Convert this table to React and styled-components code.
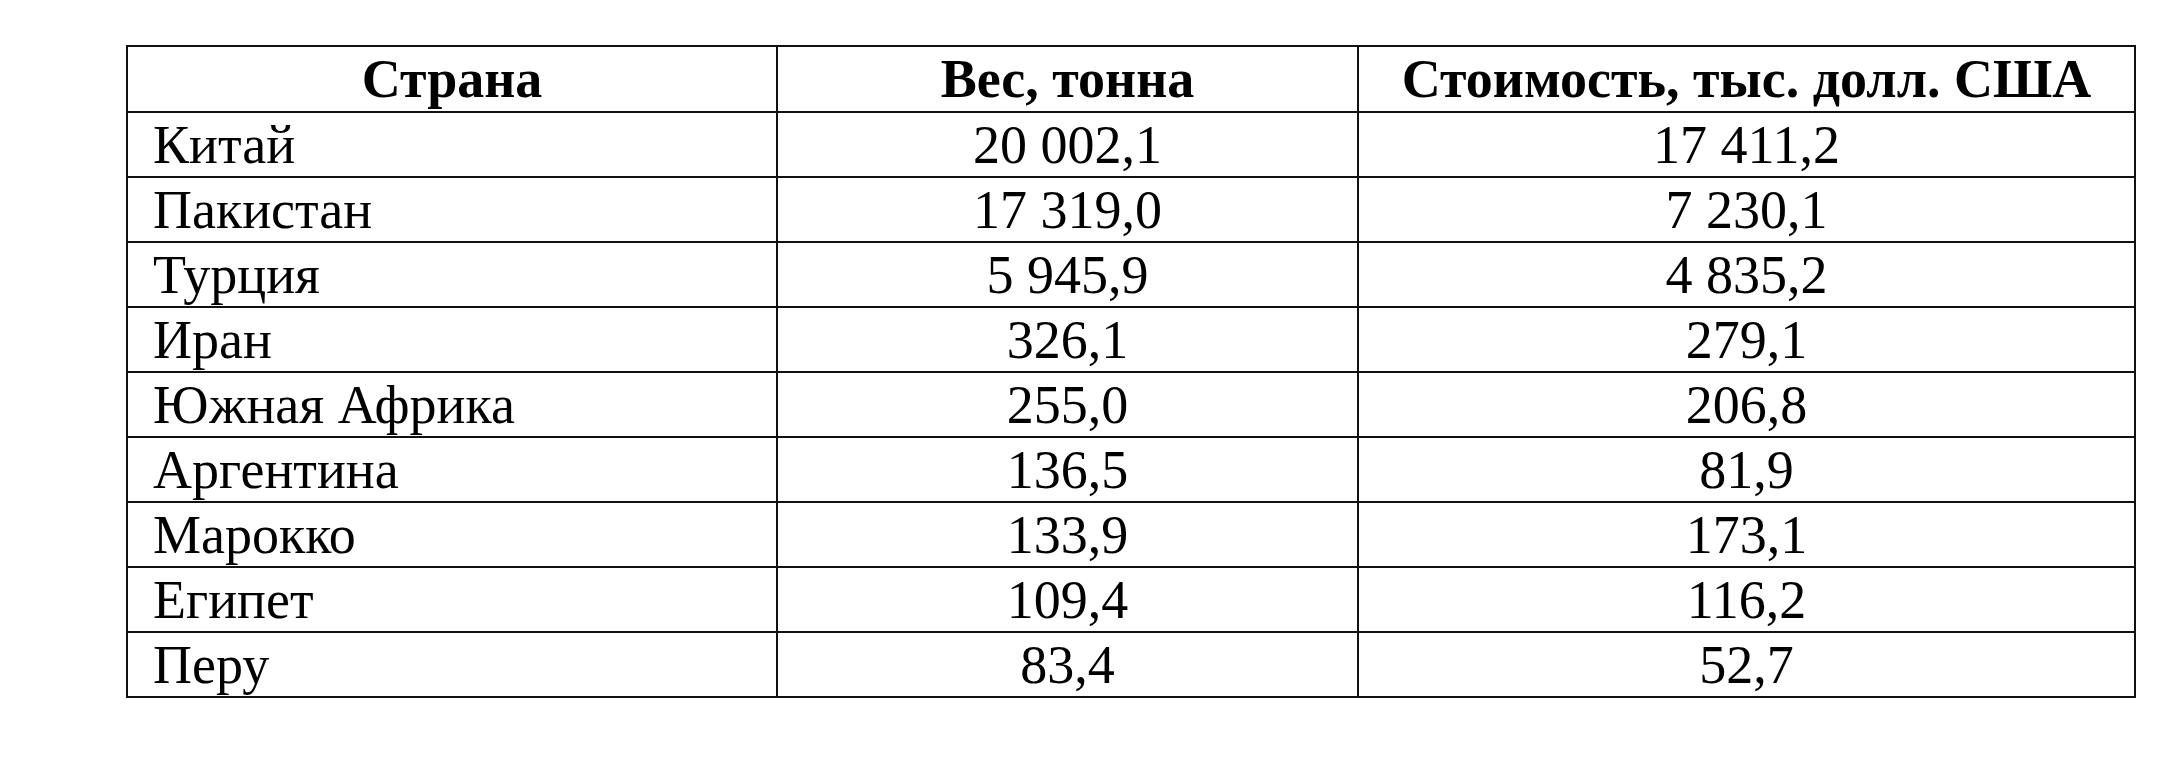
import React from "react";
import styled, { createGlobalStyle } from "styled-components";

const Global = createGlobalStyle`
  html, body { margin: 0; padding: 0; background: #ffffff; }
  body { font-family: "Liberation Serif", "Times New Roman", serif; color: #000; }
`;

const Page = styled.div`
  width: 2160px;
  height: 758px;
  box-sizing: border-box;
  padding: 45px 0 0 126px;
  background: #fff;
`;

const Table = styled.table`
  border-collapse: collapse;
  table-layout: fixed;
  width: 2008px;
  font-family: "Liberation Serif", "Times New Roman", serif;
  font-size: 54px;
  line-height: 1;
  color: #000;
`;

const Col = styled.col`
  width: ${(p) => p.$w}px;
`;

const HeadCell = styled.th`
  height: 64px;
  padding: 0;
  border: 2px solid #111;
  font-weight: 700;
  text-align: center;
  vertical-align: middle;
  white-space: nowrap;
`;

const Cell = styled.td`
  height: 63px;
  padding: 0 0 0 ${(p) => (p.$left ? "25px" : "0")};
  border: 2px solid #111;
  text-align: ${(p) => (p.$left ? "left" : "center")};
  vertical-align: middle;
  white-space: nowrap;
`;

const rows = [
  ["Китай", "20 002,1", "17 411,2"],
  ["Пакистан", "17 319,0", "7 230,1"],
  ["Турция", "5 945,9", "4 835,2"],
  ["Иран", "326,1", "279,1"],
  ["Южная Африка", "255,0", "206,8"],
  ["Аргентина", "136,5", "81,9"],
  ["Марокко", "133,9", "173,1"],
  ["Египет", "109,4", "116,2"],
  ["Перу", "83,4", "52,7"],
];

export default function App() {
  return (
    <>
      <Global />
      <Page>
        <Table>
          <colgroup>
            <Col $w={650} />
            <Col $w={581} />
            <Col $w={777} />
          </colgroup>
          <thead>
            <tr>
              <HeadCell>Страна</HeadCell>
              <HeadCell>Вес, тонна</HeadCell>
              <HeadCell>Стоимость, тыс. долл. США</HeadCell>
            </tr>
          </thead>
          <tbody>
            {rows.map(([c, w, v]) => (
              <tr key={c}>
                <Cell $left>{c}</Cell>
                <Cell>{w}</Cell>
                <Cell>{v}</Cell>
              </tr>
            ))}
          </tbody>
        </Table>
      </Page>
    </>
  );
}
